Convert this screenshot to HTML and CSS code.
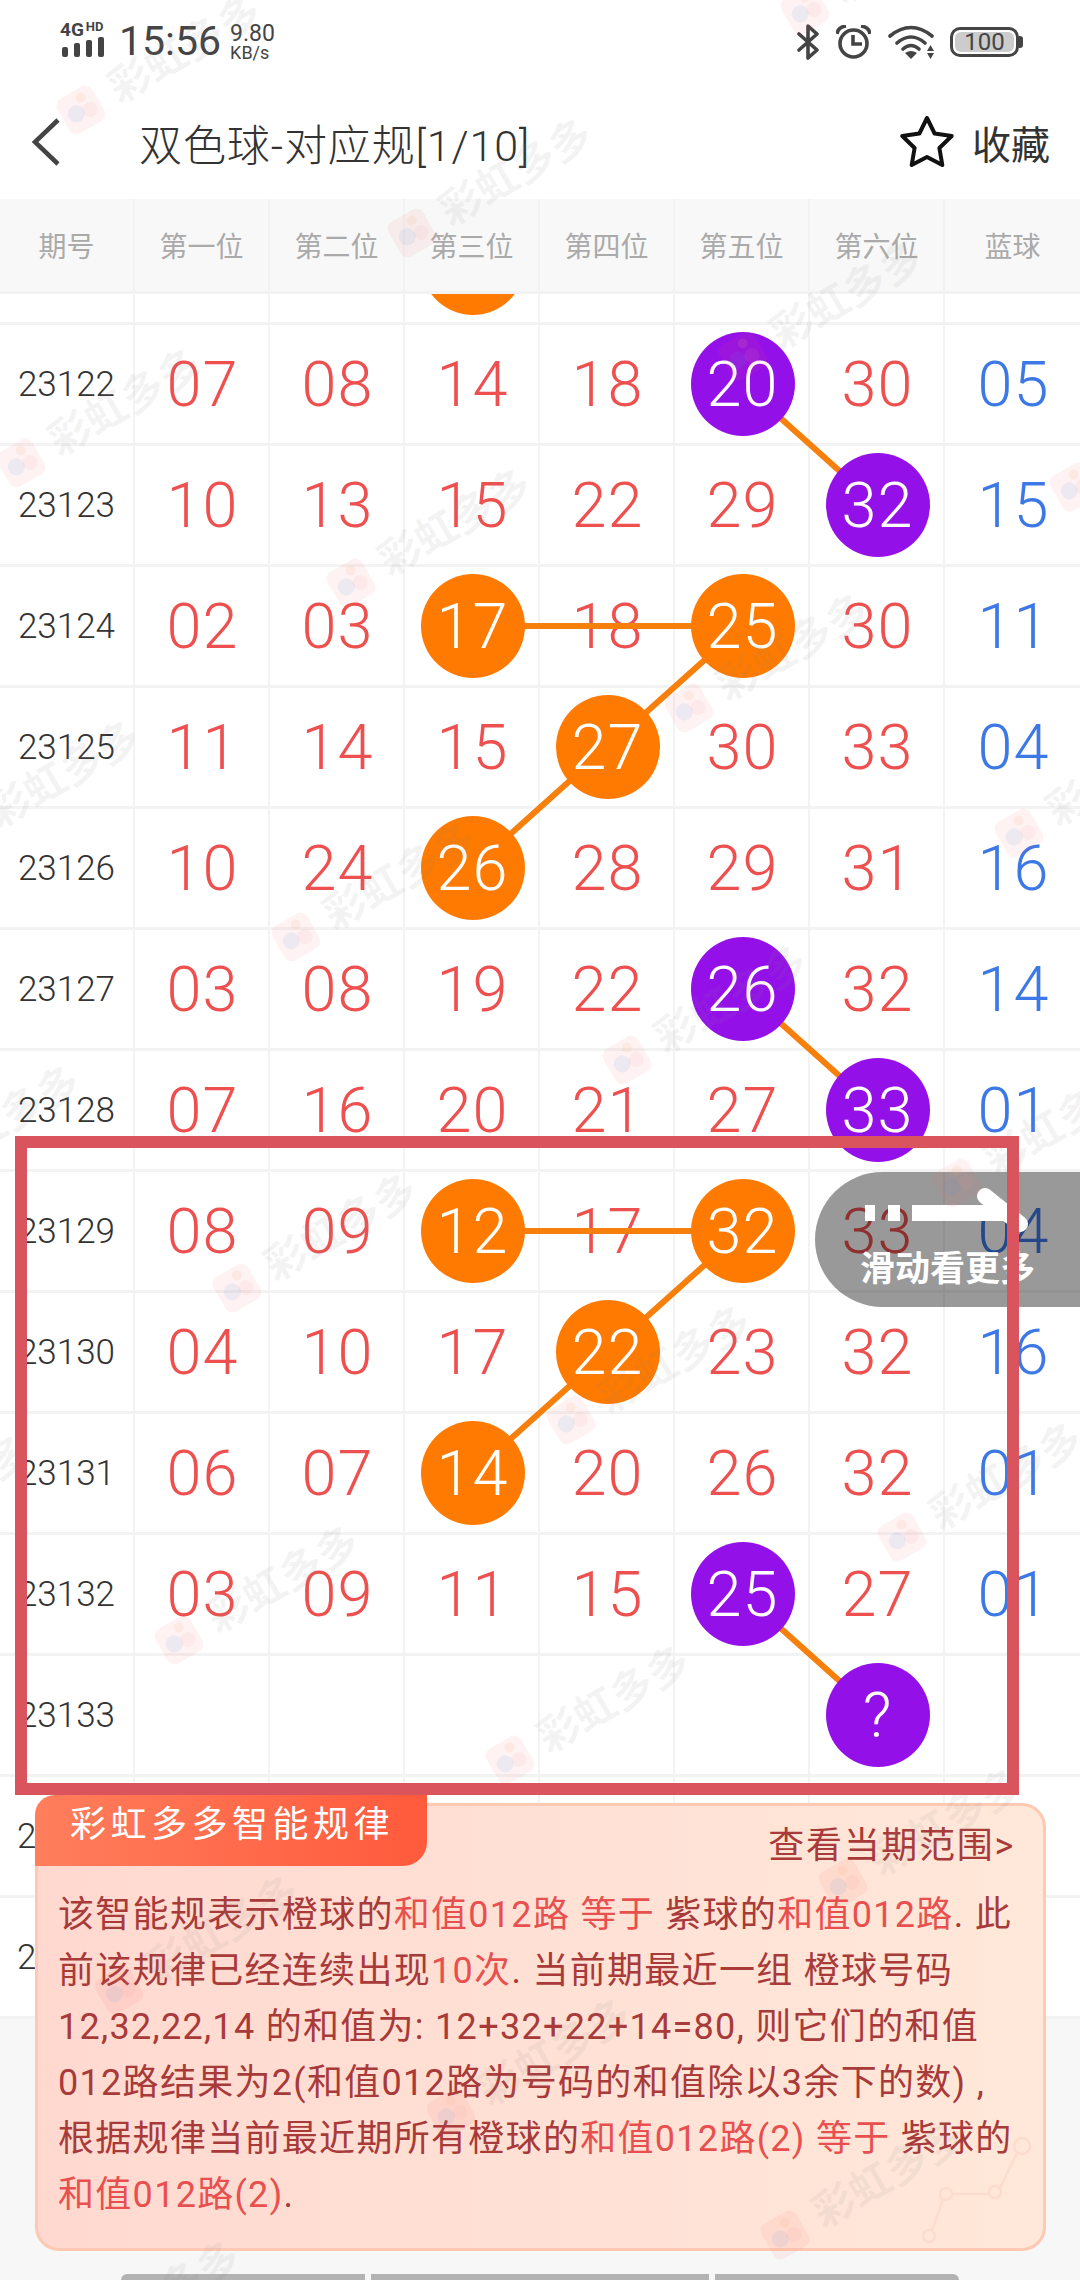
FILE: index.html
```html
<!DOCTYPE html>
<html lang="zh">
<head>
<meta charset="utf-8">
<title>双色球-对应规</title>
<link rel="stylesheet" href="styles.css">
</head>
<body>
<div class="page">
  <div class="status">
    <div class="net">
      <div class="net-top"><span class="net-g">4G</span><span class="net-hd">HD</span></div>
      <div class="bars"><i class="b1"></i><i class="b2"></i><i class="b3"></i><i class="b4"></i></div>
    </div>
    <div class="time">15:56</div>
    <div class="speed"><span>9.80</span><span class="unit">KB/s</span></div>
    <div class="status-right">
      <svg class="ic-bt" width="22" height="36" viewBox="0 0 22 36"><path d="M2 10 L20 26 L11 34 V2 L20 10 L2 26" fill="none" stroke="#444" stroke-width="3.6" stroke-linejoin="round" stroke-linecap="round"/></svg>
      <svg class="ic-alarm" width="35" height="34" viewBox="0 0 35 34"><circle cx="17.5" cy="18.5" r="13.5" fill="none" stroke="#444" stroke-width="3.6"/><path d="M17 10 V19 H26" fill="none" stroke="#444" stroke-width="3.6"/><path d="M1 9 Q2 2 10 1 M34 9 Q33 2 25 1" fill="none" stroke="#444" stroke-width="3.6"/></svg>
      <svg class="ic-wifi" width="48" height="34" viewBox="0 0 48 34"><path d="M2 11 Q23 -6 44 11 M9 18 Q23 6 37 18" fill="none" stroke="#444" stroke-width="3.6" stroke-linecap="round"/><path d="M15 24 Q23 17 31 24" fill="none" stroke="#444" stroke-width="3.6" stroke-linecap="round"/><path d="M17 28 Q23 24 29 28 L23 34 Z" fill="#444"/><path d="M39 26 L46 26 L42.5 20 Z M39 28 L46 28 L42.5 34 Z" fill="#444"/></svg>
      <div class="batt"><span class="batt-fill">100</span></div>
    </div>
  </div>

  <div class="nav">
    <svg class="back" width="30" height="50" viewBox="0 0 30 50"><path d="M27 3 L4 25 L27 47" fill="none" stroke="#444" stroke-width="4.5"/></svg>
    <div class="title">双色球-对应规[1/10]</div>
    <div class="fav">
      <svg width="54" height="52" viewBox="0 0 54 52"><path d="M27 2 L34.6 17.5 L51.7 20 L39.4 32 L42.3 49 L27 41 L11.7 49 L14.6 32 L2.3 20 L19.4 17.5 Z" fill="none" stroke="#111" stroke-width="4" stroke-linejoin="round"/></svg>
      <span>收藏</span>
    </div>
  </div>

  <div class="grid head">
    <div class="hc">期号</div><div class="hc">第一位</div><div class="hc">第二位</div><div class="hc">第三位</div><div class="hc">第四位</div><div class="hc">第五位</div><div class="hc">第六位</div><div class="hc">蓝球</div>
  </div>

  <div class="table-wrap">
    <div class="rows">
      <svg class="links" width="1080" height="1815" viewBox="0 0 1080 1815">
        <path d="M742.5 180 L877.5 301 M472.5 422 H742.5 L607.5 543 L472.5 664 M742.5 785 L877.5 906 M472.5 1027 H742.5 L607.5 1148 L472.5 1269 M742.5 1390 L877.5 1511" fill="none" stroke="#f77f0c" stroke-width="6"/>
      </svg>
      <div class="grid row"><div class="pc"></div><div class="c"></div><div class="c"></div><div class="c"><span class="ball o"></span></div><div class="c"></div><div class="c"></div><div class="c"></div><div class="c"></div></div>
      <div class="grid row"><div class="pc">23122</div><div class="c">07</div><div class="c">08</div><div class="c">14</div><div class="c">18</div><div class="c"><span class="ball p">20</span></div><div class="c">30</div><div class="c bl">05</div></div>
      <div class="grid row"><div class="pc">23123</div><div class="c">10</div><div class="c">13</div><div class="c">15</div><div class="c">22</div><div class="c">29</div><div class="c"><span class="ball p">32</span></div><div class="c bl">15</div></div>
      <div class="grid row"><div class="pc">23124</div><div class="c">02</div><div class="c">03</div><div class="c"><span class="ball o">17</span></div><div class="c">18</div><div class="c"><span class="ball o">25</span></div><div class="c">30</div><div class="c bl">11</div></div>
      <div class="grid row"><div class="pc">23125</div><div class="c">11</div><div class="c">14</div><div class="c">15</div><div class="c"><span class="ball o">27</span></div><div class="c">30</div><div class="c">33</div><div class="c bl">04</div></div>
      <div class="grid row"><div class="pc">23126</div><div class="c">10</div><div class="c">24</div><div class="c"><span class="ball o">26</span></div><div class="c">28</div><div class="c">29</div><div class="c">31</div><div class="c bl">16</div></div>
      <div class="grid row"><div class="pc">23127</div><div class="c">03</div><div class="c">08</div><div class="c">19</div><div class="c">22</div><div class="c"><span class="ball p">26</span></div><div class="c">32</div><div class="c bl">14</div></div>
      <div class="grid row"><div class="pc">23128</div><div class="c">07</div><div class="c">16</div><div class="c">20</div><div class="c">21</div><div class="c">27</div><div class="c"><span class="ball p">33</span></div><div class="c bl">01</div></div>
      <div class="grid row"><div class="pc">23129</div><div class="c">08</div><div class="c">09</div><div class="c"><span class="ball o">12</span></div><div class="c">17</div><div class="c"><span class="ball o">32</span></div><div class="c">33</div><div class="c bl">04</div></div>
      <div class="grid row"><div class="pc">23130</div><div class="c">04</div><div class="c">10</div><div class="c">17</div><div class="c"><span class="ball o">22</span></div><div class="c">23</div><div class="c">32</div><div class="c bl">16</div></div>
      <div class="grid row"><div class="pc">23131</div><div class="c">06</div><div class="c">07</div><div class="c"><span class="ball o">14</span></div><div class="c">20</div><div class="c">26</div><div class="c">32</div><div class="c bl">01</div></div>
      <div class="grid row"><div class="pc">23132</div><div class="c">03</div><div class="c">09</div><div class="c">11</div><div class="c">15</div><div class="c"><span class="ball p">25</span></div><div class="c">27</div><div class="c bl">01</div></div>
      <div class="grid row"><div class="pc">23133</div><div class="c"></div><div class="c"></div><div class="c"></div><div class="c"></div><div class="c"></div><div class="c"><span class="ball p">?</span></div><div class="c bl"></div></div>
      <div class="grid row"><div class="pc peek">2</div><div class="c"></div><div class="c"></div><div class="c"></div><div class="c"></div><div class="c"></div><div class="c"></div><div class="c"></div></div>
      <div class="grid row"><div class="pc peek">2</div><div class="c"></div><div class="c"></div><div class="c"></div><div class="c"></div><div class="c"></div><div class="c"></div><div class="c"></div></div>
    </div>
    <div class="tabs-peek"><i class="peek-a"></i><i class="peek-b"></i><i class="peek-c"></i></div>
  </div>

  <div class="swipe">
    <svg class="swipe-arrow" width="265" height="70" viewBox="0 0 265 70"><path d="M50 41 H60 M73 41 H85 M97 41 H192" fill="none" stroke="#fff" stroke-width="16"/><path d="M170 24 L205 52" fill="none" stroke="#fff" stroke-width="16" stroke-linecap="round"/></svg>
    <div class="swipe-text">滑动看更多</div>
  </div>

  <div class="card">
    <svg class="card-deco" width="120" height="110" viewBox="0 0 120 110"><g fill="none" stroke="#fbdccd" stroke-width="2.5"><circle cx="103" cy="10" r="8"/><circle cx="76" cy="56" r="6"/><circle cx="27" cy="58" r="6"/><circle cx="10" cy="100" r="6"/><path d="M13 95 L24 63 M33 58 H70 M81 52 L98 17"/></g></svg>
    <div class="card-tab">彩虹多多智能规律</div>
    <div class="card-link">查看当期范围&gt;</div>
    <div class="card-body">
      <p>该智能规表示橙球的<em>和值012路 等于</em> 紫球的<em>和值012路</em>. 此</p>
      <p>前该规律已经连续出现<em>10次</em>. 当前期最近一组 橙球号码</p>
      <p>12,32,22,14 的和值为: 12+32+22+14=80, 则它们的和值</p>
      <p>012路结果为2(和值012路为号码的和值除以3余下的数) ,</p>
      <p>根据规律当前最近期所有橙球的<em>和值012路(2) 等于</em> 紫球的</p>
      <p><em>和值012路(2)</em>.</p>
    </div>
  </div>

  <svg class="watermarks" width="1080" height="2280" viewBox="0 0 1080 2280">
    <defs>
      <g id="wm">
        <rect x="-20" y="-20" width="40" height="40" rx="8" fill="#f25555" opacity=".08"/>
        <circle cx="-6" cy="1" r="8.5" fill="#5b9bf0" opacity=".1"/>
        <circle cx="8" cy="4" r="7.5" fill="#f2a0a0" opacity=".1"/>
        <circle cx="6" cy="-11" r="5" fill="#f5b070" opacity=".12"/>
        <text x="36" y="14" class="wm-text">彩虹多多</text>
      </g>
    </defs>
    <use href="#wm" transform="translate(81 110) rotate(-30)"/>
    <use href="#wm" transform="translate(412 233) rotate(-30)"/>
    <use href="#wm" transform="translate(743 356) rotate(-30)"/>
    <use href="#wm" transform="translate(805 10) rotate(-30)"/>
    <use href="#wm" transform="translate(21 463) rotate(-30)"/>
    <use href="#wm" transform="translate(351 583) rotate(-30)"/>
    <use href="#wm" transform="translate(689 708) rotate(-30)"/>
    <use href="#wm" transform="translate(1074 487) rotate(-30)"/>
    <use href="#wm" transform="translate(-40 835) rotate(-30)"/>
    <use href="#wm" transform="translate(296 937) rotate(-30)"/>
    <use href="#wm" transform="translate(627 1060) rotate(-30)"/>
    <use href="#wm" transform="translate(1019 833) rotate(-30)"/>
    <use href="#wm" transform="translate(-100 1180) rotate(-30)"/>
    <use href="#wm" transform="translate(237 1288) rotate(-30)"/>
    <use href="#wm" transform="translate(957 1183) rotate(-30)"/>
    <use href="#wm" transform="translate(571 1420) rotate(-30)"/>
    <use href="#wm" transform="translate(-150 1550) rotate(-30)"/>
    <use href="#wm" transform="translate(902 1537) rotate(-30)"/>
    <use href="#wm" transform="translate(179 1640) rotate(-30)"/>
    <use href="#wm" transform="translate(510 1760) rotate(-30)"/>
    <use href="#wm" transform="translate(843 1883) rotate(-30)"/>
    <use href="#wm" transform="translate(119 1990) rotate(-30)"/>
    <use href="#wm" transform="translate(451 2113) rotate(-30)"/>
    <use href="#wm" transform="translate(785 2235) rotate(-30)"/>
    <use href="#wm" transform="translate(60 2355) rotate(-30)"/>
  </svg>

  <div class="redbox"></div>
</div>
</body>
</html>
```

FILE: styles.css
```css
* { box-sizing: border-box; }
html, body { margin: 0; padding: 0; background: #fff; }
body { font-family: Roboto, "Noto Sans CJK SC", sans-serif; }
.page { position: relative; width: 1080px; height: 2280px; overflow: hidden; display: flex; flex-direction: column; background: #fff; }

/* status bar */
.status { height: 85px; flex: none; display: flex; align-items: flex-start; color: #444; padding: 22px 60px 0 60px; }
.net { width: 46px; display: flex; flex-direction: column; }
.net-top { display: flex; height: 15px; align-items: flex-start; font-weight: 700; line-height: 15px; }
.net-g { font-size: 19px; }
.net-hd { font-size: 13px; margin-left: 2px; line-height: 10px; }
.bars { display: flex; align-items: flex-end; gap: 6px; height: 20px; margin-top: 0; margin-left: 2px; }
.bars i { display: block; width: 6px; background: #444; border-radius: 2px; }
.b1 { height: 10px; } .b2 { height: 14px; } .b3 { height: 17px; } .b4 { height: 20px; }
.time { font-size: 41px; line-height: 40px; margin-left: 13px; margin-top: -1px; }
.speed { display: flex; flex-direction: column; margin-left: 9px; font-size: 23px; line-height: 21px; margin-top: 1px; }
.speed .unit { font-size: 18px; line-height: 17px; }
.status-right { margin-left: auto; display: flex; align-items: center; height: 36px; margin-top: 2px; }
.ic-alarm { margin-left: 17px; }
.ic-wifi { margin-left: 17px; }
.batt { position: relative; margin-left: 14px; margin-right: 1px; width: 69px; height: 30px; border: 3px solid #444; border-radius: 10px; padding: 2px; }
.batt::after { content: ""; position: absolute; right: -7px; top: 6px; width: 4px; height: 12px; background: #444; border-radius: 0 3px 3px 0; }
.batt-fill { display: block; height: 100%; background: #ccc; border-radius: 6px; font-size: 24px; line-height: 20px; text-align: center; color: #444; }

/* nav */
.nav { height: 114px; flex: none; display: flex; align-items: center; padding: 0 30px 0 31px; }
.back { flex: none; }
.title { margin-left: 78px; font-size: 43px; color: #333; font-weight: 300; white-space: nowrap; letter-spacing: .9px; }
.fav { margin-left: auto; display: flex; align-items: center; font-size: 39px; color: #333; gap: 18px; }

/* table */
.grid { display: grid; grid-template-columns: repeat(8, 135px); }
.head { height: 95px; flex: none; background: #f8f8f8; border-bottom: 3px solid #f2f2f2; }
.hc { display: flex; align-items: center; justify-content: center; font-size: 28px; color: #aaa; border-right: 2px solid #f2f2f2; }
.hc:last-child { border-right: 0; }

.table-wrap { flex: 1; min-height: 0; background: #f7f7f7; overflow: hidden; display: flex; flex-direction: column; }
.rows { position: relative; margin-top: -90px; flex: none; background: #fff; }
.links { position: absolute; left: 0; top: 0; z-index: 1; }
.row { height: 121px; }
.pc, .c { display: flex; align-items: center; justify-content: center; border-right: 2px solid #f3f3f3; border-bottom: 3px solid #f3f3f3; }
.c:last-child { border-right: 0; }
.pc { font-size: 35px; color: #333; font-weight: 300; }
.pc.peek { justify-content: flex-start; padding-left: 17px; }
.c { font-size: 63px; font-weight: 300; color: #ee5050; padding-left: 2px; letter-spacing: 1px; }
.c.bl { color: #3d79e6; }
.ball { position: relative; z-index: 2; width: 104px; height: 104px; flex: none; border-radius: 50%; color: #fff; display: flex; align-items: center; justify-content: center; }
.ball.o { background: #ff7a00; }
.ball.p { background: #9410e8; }

.tabs-peek { margin-top: auto; display: flex; justify-content: center; gap: 6px; height: 6px; flex: none; }
.tabs-peek i { display: block; height: 6px; background: #b3b3b3; }
.peek-a { width: 244px; border-radius: 6px 0 0 0; }
.peek-b { width: 338px; }
.peek-c { width: 244px; border-radius: 0 6px 0 0; }

/* swipe hint */
.swipe { position: absolute; right: 0; top: 1172px; width: 265px; height: 135px; background: rgba(0, 0, 0, .4); border-radius: 68px 0 0 68px; z-index: 3; }
.swipe-arrow { display: block; }
.swipe-text { font-size: 35px; line-height: 40px; font-weight: 700; color: #fff; padding-left: 45px; margin-top: 8px; white-space: nowrap; }

/* rule card */
.card { position: absolute; left: 35px; top: 1803px; width: 1011px; height: 448px; z-index: 4; border: 3px solid #fdc9b2; border-radius: 24px; background: linear-gradient(90deg, #ffd9d0, #ffe8d9); padding: 0 28px 0 20px; color: #a83a3a; }
.card-deco { position: absolute; right: 4px; top: 330px; }
.card-tab { position: absolute; left: -3px; top: -11px; width: 392px; height: 71px; background: linear-gradient(90deg, #ff7e5c, #ff5a3c); border-radius: 20px 0 24px 0; color: #fff; font-size: 36px; line-height: 60px; letter-spacing: 4.5px; padding-left: 35px; white-space: nowrap; }
.card-link { position: relative; text-align: right; font-size: 36px; line-height: 44px; margin-top: 18px; letter-spacing: 1.7px; }
.card-body { position: relative; margin-top: 19px; font-size: 36px; line-height: 56px; }
.card-body p { margin: 0; white-space: nowrap; letter-spacing: 1.3px; }
.card-body em { font-style: normal; color: #e8504f; }

/* watermarks and annotation */
.watermarks { position: absolute; left: 0; top: 0; z-index: 5; pointer-events: none; }
.wm-text { font-family: "Noto Sans CJK SC", sans-serif; font-size: 42px; font-weight: 700; fill: #888; fill-opacity: .09; }
.redbox { position: absolute; left: 15px; top: 1136px; width: 1004px; height: 659px; border: 12px solid #d9545c; z-index: 6; }
```
